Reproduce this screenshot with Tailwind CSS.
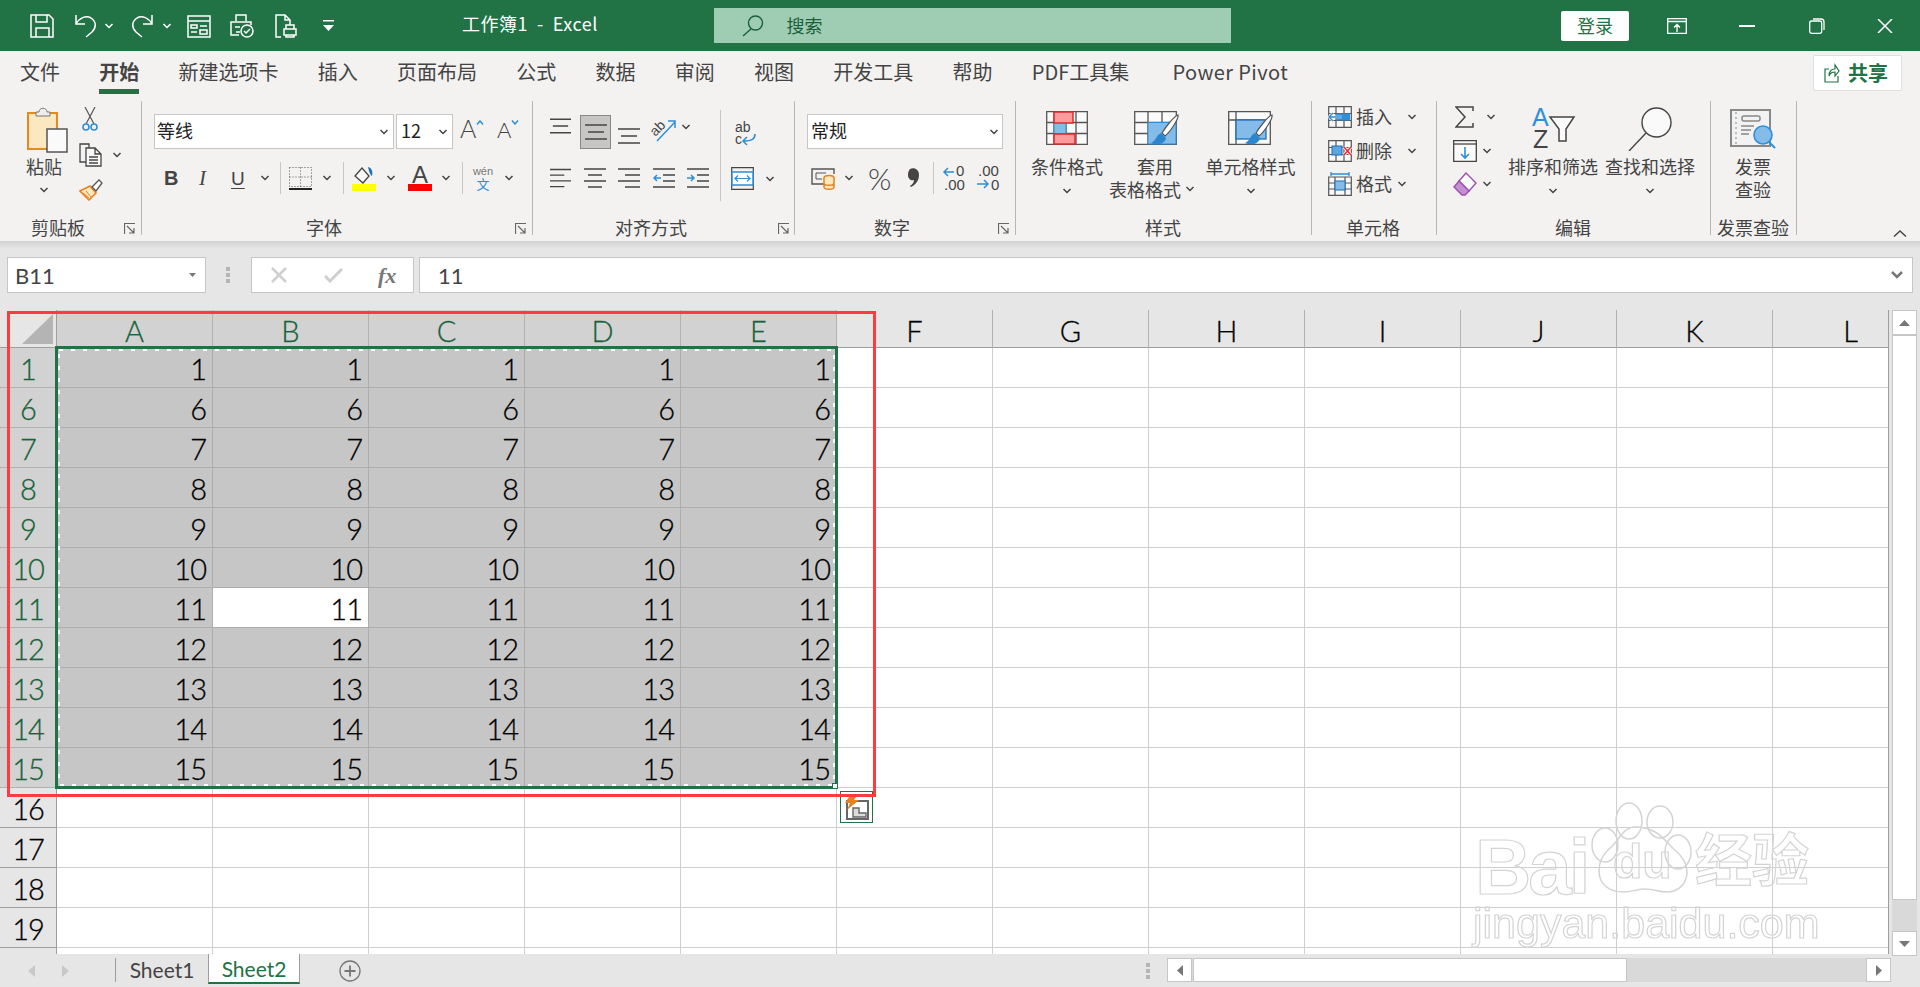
<!DOCTYPE html>
<html lang="zh-CN">
<head>
<meta charset="UTF-8">
<title>工作簿1 - Excel</title>
<script src="https://cdn.jsdelivr.net/npm/@tailwindcss/browser@4"></script>
</head>
<body class="h-[987px] w-[1920px] overflow-hidden bg-[#e6e6e6] font-['Noto_Sans_CJK_SC',sans-serif] text-[18px] leading-[19px] text-[#444]">

<!-- shared icons -->
<svg class="hidden">
  <symbol id="chev" viewBox="0 0 10 6"><path d="M1.5 1 5 4.500 8.500 1" fill="none" stroke="#444" stroke-width="1.500"/></symbol>
  <symbol id="launch" viewBox="0 0 12 12"><path d="M.5 11V.5H11M3 3l7 7M10 5v5H5" fill="none" stroke="#666" stroke-width="1.200"/></symbol>
  <symbol id="lines" viewBox="0 0 22 16"><path d="M0 1h22M3 8h16M0 15h22" stroke="#444" stroke-width="1.500"/></symbol>
  <symbol id="linesl" viewBox="0 0 22 20"><path d="M0 1h22M0 7h15M0 13h22M0 19h15" stroke="#444" stroke-width="1.500"/></symbol>
  <symbol id="linesc" viewBox="0 0 22 20"><path d="M0 1h22M4 7h14M0 13h22M4 19h14" stroke="#444" stroke-width="1.500"/></symbol>
  <symbol id="linesr" viewBox="0 0 22 20"><path d="M0 1h22M7 7h15M0 13h22M7 19h15" stroke="#444" stroke-width="1.500"/></symbol>
  <symbol id="grid" viewBox="0 0 24 22"><path d="M.7.7h22.600v20.600H.7zM.7 7.500h22.600M.7 14.500h22.600M8 .7v20.600M16 .7v20.600" fill="#f8f8f8" stroke="#555" stroke-width="1.200"/></symbol>
</svg>

<!-- title bar -->
<header class="flex h-[51px] items-center bg-[#217346] text-white">
  <svg class="ml-[30px] h-[24px] w-[24px] shrink-0" viewBox="0 0 24 24" fill="none" stroke="#fff" stroke-width="1.500"><path d="M1 1h18l4 4v18H1zM6 1v7h11V1M6 23v-9h13v9"/></svg>
  <svg class="ml-[19px] h-[24px] w-[24px] shrink-0" viewBox="0 0 24 24" fill="none" stroke="#fff" stroke-width="1.500"><path d="M3 1v9h9M3 10C6 4 13 1 18 4c6 4 5 10 1 14l-6 5"/></svg>
  <svg class="ml-[7px] h-[6px] w-[10px] shrink-0" viewBox="0 0 10 6"><path d="M1.500 1 5 4.500 8.500 1" fill="none" stroke="#fff" stroke-width="1.500"/></svg>
  <svg class="ml-[17px] h-[24px] w-[24px] shrink-0" viewBox="0 0 24 24" fill="none" stroke="#fff" stroke-width="1.500"><path d="M21 1v9h-9M21 10C18 4 11 1 6 4 0 8 1 14 5 18l6 5"/></svg>
  <svg class="ml-[7px] h-[6px] w-[10px] shrink-0" viewBox="0 0 10 6"><path d="M1.500 1 5 4.500 8.500 1" fill="none" stroke="#fff" stroke-width="1.500"/></svg>
  <svg class="ml-[15px] h-[24px] w-[24px] shrink-0" viewBox="0 0 24 24" fill="none" stroke="#fff" stroke-width="1.500"><path d="M1 2h22v21H1zM1 7h22M4 11h6v3H4zM13 12h7M4 18h6M13 16h7v4h-7z"/></svg>
  <svg class="ml-[19px] h-[24px] w-[24px] shrink-0" viewBox="0 0 24 24" fill="none" stroke="#fff" stroke-width="1.500"><path d="M6 7V1h10v6M9 21H1V8h20v3M5 13h5M6 18h4"/><circle cx="17" cy="17" r="6"/><path d="m14 17 2 2 4-4"/></svg>
  <svg class="ml-[21px] h-[24px] w-[22px] shrink-0" viewBox="0 0 22 24" fill="none" stroke="#fff" stroke-width="1.500"><path d="M6 23H1V1h9l5 5v5M10 1v5h5M9 15h12v6H9zM11 15v-4h8v4M11 21v2h8v-2"/></svg>
  <svg class="ml-[26px] h-[12px] w-[11px] shrink-0" viewBox="0 0 11 12" fill="#fff"><path d="M0 0h11v1.500H0zM0 5h11l-5.500 6z"/></svg>
  <div class="ml-[128px] mb-[4px] w-[136px] shrink-0 whitespace-pre text-[18px] tracking-[0.5px]">工作簿1  -  Excel</div>
  <div class="ml-[115.500px] flex h-[35px] w-[517.500px] shrink-0 items-center bg-[#9fcdb3] text-[#1b5e3a]">
    <svg class="ml-[28px] h-[22px] w-[22px] shrink-0" viewBox="0 0 22 22" fill="none" stroke="#1b5e3a" stroke-width="1.400"><circle cx="13.500" cy="8" r="7"/><path d="M9 14 1 21"/></svg>
    <span class="ml-[23px]">搜索</span>
  </div>
  <button class="ml-[330px] flex h-[30px] w-[68px] shrink-0 items-center justify-center rounded-[2px] bg-white text-[#217346]">登录</button>
  <svg class="ml-[38px] h-[16px] w-[20px] shrink-0" viewBox="0 0 20 16" fill="none" stroke="#fff" stroke-width="1.300"><path d="M.7.7h18.600v14.600H.7zM.7 3.500h18.600M10 14V7M7 9.500l3-3 3 3"/></svg>
  <div class="ml-[52px] h-[2px] w-[16px] shrink-0 bg-white"></div>
  <svg class="ml-[53.500px] h-[16px] w-[16px] shrink-0" viewBox="0 0 16 16" fill="none" stroke="#fff" stroke-width="1.300"><rect x=".7" y="3" width="12" height="12.300" rx="2"/><path d="M4 1h8a3 3 0 0 1 3 3v8"/></svg>
  <svg class="ml-[52.500px] h-[14px] w-[16px] shrink-0" viewBox="0 0 16 14" fill="none" stroke="#fff" stroke-width="1.500"><path d="m1 0 14 14M15 0 1 14"/></svg>
</header>

<!-- tabs -->
<nav class="flex h-[50px] items-start bg-[#f3f2f1] pl-[20px] text-[20px] leading-[28px]">
  <div class="flex gap-[39.250px] pt-[7px]">
    <span>文件</span>
    <span class="relative font-bold">开始<span class="absolute bottom-[-8px] left-0 h-[5px] w-full bg-[#217346]"></span></span>
    <span>新建选项卡</span>
    <span>插入</span>
    <span>页面布局</span>
    <span>公式</span>
    <span>数据</span>
    <span>审阅</span>
    <span>视图</span>
    <span>开发工具</span>
    <span>帮助</span>
    <span>PDF工具集</span>
    <span class="ml-[4px] tracking-[0.4px]">Power Pivot</span>
  </div>
  <button class="ml-auto mr-[18px] mt-[4px] flex h-[36px] w-[89px] items-center rounded-[2px] border border-[#e1dfdd] bg-white font-bold text-[#217346]">
    <svg class="ml-[10px] mr-[8px] h-[20px] w-[16px]" viewBox="0 0 16 20" fill="none" stroke="#217346" stroke-width="1.200"><path d="M5 6H1v13h13v-6M5 13c0-5 3-7 6-7V2l4 6-4 5V9c-3 0-5 1-6 4z"/></svg>共享
  </button>
</nav>

<!-- ribbon -->
<div class="flex h-[140px] items-start bg-[#f3f2f1]">

  <!-- clipboard -->
  <section class="flex h-[134px] w-[142px] shrink-0 flex-col border-r border-[#b8b6b4]">
    <div class="flex pt-[6px]">
      <div class="ml-[9px] flex w-[70px] flex-col items-center">
        <svg class="ml-[6px] h-[46px] w-[41px]" viewBox="0 0 41 46"><rect x="1" y="6" width="29" height="36" fill="#fbe7c0" stroke="#e38b1e" stroke-width="2"/><path d="M9 9V5h3c0-5 8-5 8 0h3v4z" fill="#eee" stroke="#777"/><rect x="20" y="22" width="20" height="23" fill="#fafafa" stroke="#555" stroke-width="1.500"/></svg>
        <span class="mt-[4px]">粘贴</span>
        <svg class="mt-[11px] h-[6px] w-[10px]"><use href="#chev"/></svg>
      </div>
      <div class="flex flex-col">
        <svg class="ml-[3px] h-[24px] w-[16px]" viewBox="0 0 16 24" fill="none"><path d="M3 0l9 17M13 0 4 17" stroke="#555" stroke-width="1.200"/><circle cx="4" cy="20" r="3" stroke="#2e8fd8" stroke-width="1.600"/><circle cx="12" cy="20" r="3" stroke="#2e8fd8" stroke-width="1.600"/></svg>
        <div class="mt-[12px] flex items-center">
          <svg class="h-[24px] w-[24px]" viewBox="0 0 24 24" fill="none" stroke="#444" stroke-width="1.300"><path d="M7 19H1V1h9v4"/><path d="M7 5h9l6 6v12H7zM16 5v6h6M10 14h9M10 17h9M10 20h9" fill="#f8f8f8"/></svg>
          <svg class="ml-[9px] h-[6px] w-[10px]"><use href="#chev"/></svg>
        </div>
        <svg class="mt-[12px] h-[22px] w-[24px]" viewBox="0 0 24 22" fill="none"><path d="M1 12 11 7l6 7-7 7z" fill="#fbe7c0" stroke="#e8821e" stroke-width="1.600"/><path d="M4 14l6 5M7 12l5 6" stroke="#e8821e"/><path d="M13 8l7-7 3 3-6 8z" fill="#fff" stroke="#555" stroke-width="1.300"/></svg>
      </div>
    </div>
    <div class="mt-auto flex h-[20px] items-end">
      <span class="mb-[-2px] w-[116px] text-center leading-[20px]">剪贴板</span>
      <svg class="ml-[8px] h-[12px] w-[12px]"><use href="#launch"/></svg>
    </div>
  </section>

  <!-- font -->
  <section class="flex h-[134px] w-[391px] shrink-0 flex-col border-r border-[#b8b6b4] pl-[12px] pt-[13px]">
    <div class="flex h-[35px] items-center">
      <div class="flex h-[35px] w-[240px] items-center border border-[#c8c6c4] bg-white pl-[2px] text-[#222]"><span class="mb-[2px]">等线</span><svg class="ml-auto mr-[4px] h-[6px] w-[10px]"><use href="#chev"/></svg></div>
      <div class="ml-[2px] flex h-[35px] w-[57px] items-center border border-[#c8c6c4] bg-white pl-[4px] text-[#222]"><span class="mb-[2px]">12</span><svg class="ml-auto mr-[4px] h-[6px] w-[10px]"><use href="#chev"/></svg></div>
      <div class="mb-[6px] ml-[7px] flex w-[25px] shrink-0 items-start font-['Lato',sans-serif] text-[25px] font-light">A<svg class="mt-[1px] h-[5px] w-[8px]" viewBox="0 0 8 5"><path d="M1 4.500 4 1l3 3.500" fill="none" stroke="#2e8fd8" stroke-width="1.500"/></svg></div>
      <div class="mb-[4px] ml-[12px] flex w-[23px] shrink-0 items-start font-['Lato',sans-serif] text-[22px] font-light">A<svg class="h-[5px] w-[8px]" viewBox="0 0 8 5"><path d="M1 .5 4 4l3-3.500" fill="none" stroke="#2e8fd8" stroke-width="1.500"/></svg></div>
    </div>
    <div class="mt-[16px] flex h-[26px] items-center">
      <span class="ml-[10px] w-[12px] font-['Liberation_Sans',sans-serif] text-[20px] font-bold">B</span>
      <span class="ml-[23px] w-[10px] font-['Liberation_Serif',serif] text-[21px] italic">I</span>
      <span class="ml-[22px] w-[13px] font-['Liberation_Sans',sans-serif] text-[19px] underline underline-offset-3">U</span>
      <svg class="ml-[15.500px] h-[6px] w-[10px]"><use href="#chev"/></svg>
      <div class="ml-[10.500px] h-[32px] w-px bg-[#c8c6c4]"></div>
      <svg class="ml-[8px] h-[23px] w-[23px]" viewBox="0 0 23 23" fill="none"><path d="M.5.500h22v19H.5zM11.500.500v19M.5 10h22" stroke="#555" stroke-dasharray="1 2"/><path d="M0 22h23" stroke="#222" stroke-width="2"/></svg>
      <svg class="ml-[10px] h-[6px] w-[10px]"><use href="#chev"/></svg>
      <div class="ml-[11px] h-[32px] w-px bg-[#c8c6c4]"></div>
      <svg class="ml-[8px] h-[25px] w-[24px]" viewBox="0 0 24 25"><path d="M3 10 10 2l7 8-6 7z" fill="#f8f8f8" stroke="#444" stroke-width="1.300"/><path d="M16 1c4 1 5 5 4 9-2-1-3-5-4-9z" fill="#1f6fb5"/><rect y="18" width="24" height="7" fill="#ffff00"/></svg>
      <svg class="ml-[10px] h-[6px] w-[10px]"><use href="#chev"/></svg>
      <svg class="ml-[12px] h-[25px] w-[24px]" viewBox="0 0 24 25"><text x="12" y="17" text-anchor="middle" font-family="Liberation Sans" font-size="24" fill="#444">A</text><rect y="18" width="24" height="7" fill="#ff0000"/></svg>
      <svg class="ml-[9px] h-[6px] w-[10px]"><use href="#chev"/></svg>
      <div class="ml-[11px] h-[32px] w-px bg-[#c8c6c4]"></div>
      <div class="ml-[9px] flex w-[22px] flex-col items-center text-[#2e8fd8]">
        <span class="font-['Liberation_Sans',sans-serif] text-[11px] leading-[11px] text-[#777]">wén</span>
        <span class="text-[13px] leading-[14px]">文</span>
      </div>
      <svg class="ml-[10px] h-[6px] w-[10px]"><use href="#chev"/></svg>
    </div>
    <div class="ml-[-12px] mt-auto flex h-[20px] items-end">
      <span class="mb-[-2px] w-[364px] text-center leading-[20px]">字体</span>
      <svg class="ml-[9px] h-[12px] w-[12px]"><use href="#launch"/></svg>
    </div>
  </section>

  <!-- alignment -->
  <section class="flex h-[134px] w-[262px] shrink-0 flex-col border-r border-[#b8b6b4] pl-[17px] pt-[9px]">
    <div class="flex">
      <div class="w-[159px] shrink-0 pt-[5px]">
        <div class="flex h-[34px] items-start">
          <svg class="mt-[3px] h-[16px] w-[21px]"><use href="#lines"/></svg>
          <div class="ml-[9px] flex h-[34px] w-[31px] items-center justify-center border border-[#8a8886] bg-[#c8c6c4]"><svg class="h-[16px] w-[22px]"><use href="#lines"/></svg></div>
          <svg class="ml-[7px] mt-[13px] h-[16px] w-[22px]"><use href="#lines"/></svg>
          <svg class="ml-[11px] mt-[3px] h-[24px] w-[26px] overflow-visible" viewBox="0 0 26 24"><text x="0" y="15" font-family="Liberation Sans" font-size="14" fill="#444" transform="rotate(-45 7 12)">ab</text><path d="M6 23 24 4M17 3h7v7" fill="none" stroke="#2e8fd8" stroke-width="1.500"/></svg>
          <svg class="ml-[4px] mt-[9px] h-[6px] w-[10px]"><use href="#chev"/></svg>
        </div>
        <div class="mt-[16px] flex h-[26px] items-center">
          <svg class="h-[20px] w-[21px]"><use href="#linesl"/></svg>
          <svg class="ml-[13px] h-[20px] w-[22px]"><use href="#linesc"/></svg>
          <svg class="ml-[12px] h-[20px] w-[22px]"><use href="#linesr"/></svg>
          <svg class="ml-[13px] h-[20px] w-[22px]" viewBox="0 0 22 20" fill="none"><path d="M0 1h22M10 7h12M10 13h12M0 19h22" stroke="#444" stroke-width="1.500"/><path d="M8 10H1M4 7l-3 3 3 3" stroke="#2e8fd8" stroke-width="1.500"/></svg>
          <svg class="ml-[12px] h-[20px] w-[22px]" viewBox="0 0 22 20" fill="none"><path d="M0 1h22M10 7h12M10 13h12M0 19h22" stroke="#444" stroke-width="1.500"/><path d="M0 10h7M4 7l3 3-3 3" stroke="#2e8fd8" stroke-width="1.500"/></svg>
        </div>
      </div>
      <div class="ml-[11px] h-[91px] w-px shrink-0 bg-[#c8c6c4]"></div>
      <div class="flex flex-col">
        <svg class="ml-[14px] mt-[11px] h-[24px] w-[21px] overflow-visible" viewBox="0 0 21 24"><text x="0" y="11" font-family="Liberation Sans" font-size="14" fill="#444">ab</text><text x="0" y="23" font-family="Liberation Sans" font-size="14" fill="#444">c</text><path d="M20 13c0 5-3 7-12 7M12 16l-4 4 4 4" fill="none" stroke="#2e8fd8" stroke-width="1.600"/></svg>
        <div class="ml-[10px] mt-[22px] flex items-center">
          <svg class="h-[23px] w-[23px]" viewBox="0 0 23 23" fill="none"><path d="M.7.7h21.600v21.600H.7z" stroke="#444" stroke-width="1.200"/><rect x="1" y="5" width="21" height="13" fill="#fff" stroke="#2e8fd8" stroke-width="1.500"/><path d="M4 11.500h15M7 8.500l-3 3 3 3M16 8.500l3 3-3 3" stroke="#2e8fd8" stroke-width="1.200"/></svg>
          <svg class="ml-[10.500px] h-[6px] w-[10px]"><use href="#chev"/></svg>
        </div>
      </div>
    </div>
    <div class="ml-[-17px] mt-auto flex h-[20px] items-end">
      <span class="mb-[-2px] w-[236px] text-center leading-[20px]">对齐方式</span>
      <svg class="ml-[8.500px] h-[12px] w-[12px]"><use href="#launch"/></svg>
    </div>
  </section>

  <!-- number -->
  <section class="flex h-[134px] w-[221px] shrink-0 flex-col border-r border-[#b8b6b4] pl-[12px] pt-[13px]">
    <div class="flex h-[35px] w-[196px] items-center border border-[#c8c6c4] bg-white pl-[3px] text-[#222]"><span class="mb-[2px]">常规</span><svg class="ml-auto mr-[3px] h-[6px] w-[10px]"><use href="#chev"/></svg></div>
    <div class="mt-[16px] flex h-[26px] items-center">
      <svg class="ml-[4px] h-[24px] w-[24px]" viewBox="0 0 24 24" fill="none"><path d="M15 18H1V3h22v5" stroke="#555" stroke-width="1.400"/><path d="M5 7h10M5 13h6M5 7v6" stroke="#555"/><ellipse cx="18" cy="12" rx="5" ry="2.500" fill="#fbe7c0" stroke="#e8821e" stroke-width="1.500"/><path d="M13 12v9c0 3 10 3 10 0v-9M13 17c0 3 10 3 10 0" fill="#fbe7c0" stroke="#e8821e" stroke-width="1.500"/></svg>
      <svg class="ml-[9px] h-[6px] w-[10px]"><use href="#chev"/></svg>
      <span class="ml-[14px] w-[24px] font-['Lato',sans-serif] text-[30px] font-light leading-[26px] tracking-[-2px]">%</span>
      <svg class="ml-[15px] h-[22px] w-[15px]" viewBox="0 0 15 22"><path d="M3 2c4-2 9 0 9 6 0 6-4 10-8 12l-1-1c3-2 4-4 4-6-3 1-6-1-6-5 0-3 1-5 2-6z" fill="#444"/></svg>
      <div class="ml-[11px] h-[32px] w-px bg-[#c8c6c4]"></div>
      <svg class="ml-[8px] h-[26px] w-[23px] overflow-visible" viewBox="0 0 23 26" font-family="Liberation Sans" font-size="15" fill="#444"><text x="14" y="11">0</text><text x="2" y="25">.00</text><path d="M12 7H2M6 3 2 7l4 4" fill="none" stroke="#2e8fd8" stroke-width="1.500"/></svg>
      <svg class="ml-[11px] h-[26px] w-[23px] overflow-visible" viewBox="0 0 23 26" font-family="Liberation Sans" font-size="15" fill="#444"><text x="2" y="11">.00</text><text x="15" y="25">0</text><path d="M1 19h11M8 15l4 4-4 4" fill="none" stroke="#2e8fd8" stroke-width="1.500"/></svg>
    </div>
    <div class="ml-[-12px] mt-auto flex h-[20px] items-end">
      <span class="mb-[-2px] w-[194px] text-center leading-[20px]">数字</span>
      <svg class="ml-[9px] h-[12px] w-[12px]"><use href="#launch"/></svg>
    </div>
  </section>

  <!-- styles -->
  <section class="flex h-[134px] w-[296px] shrink-0 flex-col border-r border-[#b8b6b4] pt-[10px]">
    <div class="flex">
      <div class="ml-[15px] flex w-[72px] flex-col items-center">
        <svg class="h-[34px] w-[42px]" viewBox="0 0 42 34"><path d="M.7.7h40.600v32.600H.7zM.7 11.500h40.600M.7 22.500h40.600M8 .7v32.600M20 .7v32.600M30 .7v32.600" fill="#fafafa" stroke="#555" stroke-width="1.300"/><rect x="8" y="11.500" width="12" height="11" fill="#85bbe8" stroke="#2e8fd8"/><rect x="8" y="1" width="19" height="11" fill="#ff9a9f" stroke="#dc2c2c" stroke-width="1.500"/><rect x="8" y="23" width="21" height="10" fill="#ff9a9f" stroke="#dc2c2c" stroke-width="1.500"/></svg>
        <span class="mt-[12px]">条件格式</span>
        <svg class="mt-[12px] h-[6px] w-[10px]"><use href="#chev"/></svg>
      </div>
      <div class="ml-[6px] flex w-[88px] flex-col">
        <svg class="ml-[25px] h-[34px] w-[45px]" viewBox="0 0 45 34"><path d="M.7.7h41.600v32.600H.7zM.7 11.500h41.600M.7 22.500h41.600M14 .7v32.600M28 .7v32.600" fill="#fafafa" stroke="#555" stroke-width="1.300"/><rect x="14" y="11.500" width="28" height="21.500" fill="#85bbe8" stroke="#2e8fd8"/><path d="M44 4c1 4-8 17-13 21l-3-3C31 17 40 5 44 4z" fill="#fff" stroke="#555" stroke-width="1.200"/><path d="M27 22c-4 1-5 8-10 10 6 3 14 1 15-5z" fill="#2b86cd"/></svg>
        <span class="ml-[28px] mt-[12px]">套用</span>
        <div class="mt-[3.500px] flex items-center">表格格式<svg class="ml-[4px] h-[6px] w-[10px]"><use href="#chev"/></svg></div>
      </div>
      <div class="ml-[8px] flex w-[91px] flex-col items-center">
        <svg class="h-[34px] w-[45px]" viewBox="0 0 45 34"><path d="M.7.7h41.600v32.600H.7zM.7 9h41.600M8 .7v32.600" fill="#fafafa" stroke="#555" stroke-width="1.300"/><rect x="8" y="9" width="30" height="19" fill="#85bbe8" stroke="#1f6fb5" stroke-width="1.300"/><path d="M44 4c1 4-8 17-13 21l-3-3C31 17 40 5 44 4z" fill="#fff" stroke="#555" stroke-width="1.200"/><path d="M27 22c-4 1-5 8-10 10 6 3 14 1 15-5z" fill="#2b86cd"/></svg>
        <span class="mt-[12px]">单元格样式</span>
        <svg class="mt-[12px] h-[6px] w-[10px]"><use href="#chev"/></svg>
      </div>
    </div>
    <div class="mt-auto flex h-[20px] items-end">
      <span class="mb-[-2px] w-[294px] text-center leading-[20px]">样式</span>
    </div>
  </section>

  <!-- cells -->
  <section class="flex h-[134px] w-[125px] shrink-0 flex-col border-r border-[#b8b6b4] pl-[16px] pt-[4px]">
    <div class="flex h-[24px] items-center">
      <svg class="h-[22px] w-[24px]" viewBox="0 0 24 22"><use href="#grid"/><rect x="8" y="7.500" width="14" height="7" fill="#2e8fd8"/><path d="M14 11H1M5 7l-4 4 4 4" fill="none" stroke="#fff" stroke-width="2.500"/><path d="M14 11H1M5 7l-4 4 4 4" fill="none" stroke="#2e8fd8" stroke-width="1.400"/></svg>
      <span class="mb-[2px] ml-[4px]">插入</span>
      <svg class="ml-[14.500px] h-[6px] w-[10px]"><use href="#chev"/></svg>
    </div>
    <div class="mt-[10px] flex h-[24px] items-center">
      <svg class="h-[22px] w-[24px]" viewBox="0 0 24 22"><use href="#grid"/><rect x="4" y="6" width="10" height="9" fill="#5ba6e3" stroke="#1f6fb5"/><path d="m16 7 7 8M23 7l-7 8" stroke="#fff" stroke-width="3"/><path d="m16 7 7 8M23 7l-7 8" stroke="#e8262c" stroke-width="1.500"/></svg>
      <span class="mb-[2px] ml-[4px]">删除</span>
      <svg class="ml-[14.500px] h-[6px] w-[10px]"><use href="#chev"/></svg>
    </div>
    <div class="mt-[9px] flex h-[24px] items-center">
      <svg class="h-[24px] w-[24px]" viewBox="0 0 24 24"><path d="M.7 5h22.600v18.300H.7zM.7 11h22.600M.7 17h22.600M7 5v18M17 5v18" fill="#f8f8f8" stroke="#555" stroke-width="1.200"/><rect x="7" y="9" width="10" height="9" fill="#85bbe8" stroke="#1f6fb5"/><path d="M3 2h18M3 0v4M21 0v4" stroke="#2e8fd8" stroke-width="1.300"/></svg>
      <span class="mb-[2px] ml-[4px]">格式</span>
      <svg class="ml-[5px] h-[6px] w-[10px]"><use href="#chev"/></svg>
    </div>
    <div class="ml-[-16px] mt-auto flex h-[20px] items-end">
      <span class="mb-[-2px] w-[122px] text-center leading-[20px]">单元格</span>
    </div>
  </section>

  <!-- editing -->
  <section class="flex h-[134px] w-[274px] shrink-0 flex-col border-r border-[#b8b6b4]">
    <div class="flex">
      <div class="ml-[16px] w-[43px] shrink-0 pt-[4px]">
        <div class="flex h-[24px] items-center">
          <svg class="ml-[2px] h-[22px] w-[19px]" viewBox="0 0 19 22"><path d="M18 5V1H1l9 10-9 10h17v-4" fill="none" stroke="#444" stroke-width="1.500"/></svg>
          <svg class="ml-[12px] h-[6px] w-[10px]"><use href="#chev"/></svg>
        </div>
        <div class="mt-[10px] flex h-[24px] items-center">
          <svg class="h-[22px] w-[24px]" viewBox="0 0 24 22" fill="none"><path d="M.7.7h22.600v20.600H.7z" fill="#fafafa" stroke="#444" stroke-width="1.300"/><path d="M.7 4h22.600" stroke="#444" stroke-width="1.300"/><path d="M12 7v11M8 14l4 4 4-4" stroke="#2e8fd8" stroke-width="1.600"/></svg>
          <svg class="ml-[5px] h-[6px] w-[10px]"><use href="#chev"/></svg>
        </div>
        <div class="mt-[9px] flex h-[24px] items-center">
          <svg class="h-[24px] w-[24px]" viewBox="0 0 24 24"><path d="M13 1l10 10-7 8L6 9z" fill="#fff" stroke="#9c4fb0" stroke-width="1.400"/><path d="M6 9l10 10-4 4H9L1 15z" fill="#c58fd2" stroke="#9c4fb0" stroke-width="1.400"/></svg>
          <svg class="ml-[5px] h-[6px] w-[10px]"><use href="#chev"/></svg>
        </div>
      </div>
      <div class="ml-[12px] flex w-[90px] shrink-0 flex-col items-center pt-[7px]">
        <svg class="h-[40px] w-[43px] overflow-visible" viewBox="0 0 43 40" font-family="Liberation Sans" font-size="25"><text x="0" y="18" fill="#2e8fd8">A</text><text x="1" y="40" fill="#444">Z</text><path d="M18 9h24l-8 12v12h-7V21z" fill="#fafafa" stroke="#444" stroke-width="1.500"/></svg>
        <span class="mt-[9px]">排序和筛选</span>
        <svg class="mt-[12px] h-[6px] w-[10px]"><use href="#chev"/></svg>
      </div>
      <div class="ml-[7px] flex w-[90px] shrink-0 flex-col items-center pt-[6px]">
        <svg class="h-[44px] w-[44px]" viewBox="0 0 44 44" fill="none" stroke="#444" stroke-width="1.400"><circle cx="28.500" cy="15.500" r="14.500" fill="#fafafa"/><path d="M18 26 1 44"/></svg>
        <span class="mt-[6px]">查找和选择</span>
        <svg class="mt-[12px] h-[6px] w-[10px]"><use href="#chev"/></svg>
      </div>
    </div>
    <div class="mt-auto flex h-[20px] items-end">
      <span class="mb-[-2px] w-[272px] text-center leading-[20px]">编辑</span>
    </div>
  </section>

  <!-- invoice check -->
  <section class="flex h-[134px] w-[86px] shrink-0 flex-col border-r border-[#b8b6b4] pt-[8px]">
    <div class="flex w-[84px] flex-col items-center">
      <svg class="h-[40px] w-[47px]" viewBox="0 0 47 40"><rect x="1" y="1" width="39" height="36" fill="#f2f2f2" stroke="#888" stroke-width="2"/><path d="M6 3v32" stroke="#888" stroke-dasharray="2 3"/><rect x="12" y="7" width="18" height="5" rx="2" fill="none" stroke="#888" stroke-width="1.500"/><path d="M11 17h13M11 21h10M11 25h8" stroke="#888" stroke-width="1.500"/><circle cx="33" cy="26" r="9" fill="#85bbe8" stroke="#2e8fd8" stroke-width="1.600"/><path d="m39 33 6 6" stroke="#2e8fd8" stroke-width="2"/></svg>
      <span class="mt-[8px]">发票</span>
      <span class="mt-[3.500px]">查验</span>
    </div>
    <div class="mt-auto flex h-[20px] items-end">
      <span class="mb-[-2px] w-[84px] text-center leading-[20px]">发票查验</span>
    </div>
  </section>

  <svg class="ml-auto mr-[13px] mt-[129px] h-[7px] w-[14px]" viewBox="0 0 14 7"><path d="M1 6.500 7 1l6 5.500" fill="none" stroke="#444" stroke-width="1.400"/></svg>
</div>

<!-- formula bar -->
<div class="h-[69px]">
  <div class="h-[8px] bg-linear-to-b from-[#d2d2d2] to-[#e6e6e6]"></div>
  <div class="mt-[8px] flex h-[36px] items-stretch font-['Lato',sans-serif] text-[22px]">
    <div class="ml-[7px] flex w-[199px] items-center border border-[#c8c6c4] bg-white pl-[7px] text-[#444]">B11<svg class="ml-auto mr-[9px] h-[4px] w-[7px]" viewBox="0 0 7 4"><path d="M0 0h7L3.500 4z" fill="#777"/></svg></div>
    <div class="ml-[20px] flex w-[4px] flex-col justify-center gap-[2px]"><i class="h-[4px] bg-[#b5b5b5]"></i><i class="h-[4px] bg-[#b5b5b5]"></i><i class="h-[4px] bg-[#b5b5b5]"></i></div>
    <div class="ml-[21px] flex w-[163px] items-center border border-[#c8c6c4] bg-white">
      <svg class="ml-[19px] h-[16px] w-[16px]" viewBox="0 0 16 16"><path d="m1 1 14 14M15 1 1 15" stroke="#cfcfcf" stroke-width="2.500"/></svg>
      <svg class="ml-[37px] h-[15px] w-[19px]" viewBox="0 0 19 15"><path d="m1 8 5 5L18 1" fill="none" stroke="#cfcfcf" stroke-width="3"/></svg>
      <span class="ml-[35px] font-['Liberation_Serif',serif] text-[22px] font-bold italic text-[#777]">fx</span>
    </div>
    <div class="ml-[5px] flex w-[1494px] items-center border border-[#c8c6c4] bg-white pl-[18px] text-[#444]">11<svg class="ml-auto mr-[9px] h-[8px] w-[12px]" viewBox="0 0 12 8"><path d="m1 1 5 5 5-5" fill="none" stroke="#777" stroke-width="2.500"/></svg></div>
  </div>
</div>

<!-- sheet -->
<main class="flex h-[644px] items-start">
  <div class="relative h-[644px] w-[1889px] shrink-0 border-r border-[#9e9e9e]">
    <div id="sheet" class="h-[644px] overflow-hidden bg-white font-['Lato',sans-serif] text-[29px] font-light leading-none text-black [-webkit-text-stroke:0.3px]"></div>

    <!-- copy selection -->
    <div class="absolute left-[55px] top-[36px] h-[443px] w-[783px] border-[3px] border-[#217346]">
      <svg class="h-full w-full" fill="none"><rect x="1" y="1" width="775" height="435" stroke="#fff" stroke-width="2" stroke-dasharray="4 8"/></svg>
      <div class="absolute bottom-[-3px] right-[-3px] h-[6px] w-[6px] border border-[#217346] bg-white"></div>
    </div>

    <!-- paste options -->
    <div class="absolute left-[840px] top-[481px] flex h-[32px] w-[33px] items-center justify-center border border-[#217346] bg-white">
      <svg class="h-[26px] w-[26px]" viewBox="0 0 26 26"><path d="M3 7h21v18H3z" fill="#fff" stroke="#666" stroke-width="2"/><path d="M9 14h6v5h7v4H9z" fill="#ddd" stroke="#666" stroke-width="1.400"/><path d="M7 0h7L10 6h5L3 16l3-7H1z" fill="#e8821e"/></svg>
    </div>

    <!-- red annotation -->
    <div class="absolute left-[7px] top-px h-[486px] w-[869px] border-[3px] border-[#ff3b3f]"></div>

    <!-- watermark -->
    <div class="absolute left-[1473px] top-[480px] h-[160px] w-[346px] font-['Liberation_Sans',sans-serif] leading-none text-transparent blur-[0.6px] [-webkit-text-stroke:1.200px_#d4d4d4]">
      <svg class="absolute inset-0 h-full w-full" viewBox="0 0 346 160" fill="none" stroke="#d4d4d4" stroke-width="1.500"><ellipse cx="156" cy="31" rx="13" ry="18"/><ellipse cx="187" cy="32" rx="13" ry="16"/><ellipse cx="132" cy="55" rx="13" ry="17"/><ellipse cx="205" cy="62" rx="13" ry="17"/><path d="M162 37c-12 0-16 14-26 22-8 7-10 14-10 22 0 12 9 21 24 21 10 0 14-3 22-3 8 0 14 3 22 3 12 0 20-9 20-20 0-9-4-15-11-21-11-9-17-24-41-24z"/></svg>
      <span class="absolute left-[2px] top-[38px] text-[78px] font-bold tracking-[-3px]">Bai</span>
      <span class="absolute left-[140px] top-[48px] text-[48px] font-bold">du</span>
      <span class="absolute left-[222px] top-[38px] font-['Noto_Sans_CJK_SC',sans-serif] text-[57px] font-bold">经验</span>
      <span class="absolute left-0 top-[112px] whitespace-nowrap text-[43px]">jingyan.baidu.com</span>
    </div>
  </div>

  <!-- vertical scrollbar -->
  <div class="relative z-10 ml-[3px] flex h-[646px] w-[25px] shrink-0 flex-col bg-[#d9d9d9]">
    <div class="flex h-[25px] items-center justify-center border border-[#c8c6c4] bg-white"><svg class="h-[6px] w-[11px]" viewBox="0 0 11 6"><path d="M0 6h11L5.500 0z" fill="#777"/></svg></div>
    <div class="h-[565px] border border-[#c8c6c4] bg-white"></div>
    <div class="mt-auto flex h-[25px] items-center justify-center border border-[#c8c6c4] bg-white"><svg class="h-[6px] w-[11px]" viewBox="0 0 11 6"><path d="M0 0h11L5.500 6z" fill="#777"/></svg></div>
  </div>
</main>

<!-- sheet tabs -->
<footer class="flex h-[33px] items-start bg-[#e6e6e6] font-['Lato',sans-serif] text-[21px]">
  <svg class="ml-[28px] mt-[11px] h-[12px] w-[7px]" viewBox="0 0 7 12"><path d="M7 0v12L0 6z" fill="#c8c8c8"/></svg>
  <svg class="ml-[27px] mt-[11px] h-[12px] w-[7px]" viewBox="0 0 7 12"><path d="M0 0v12l7-6z" fill="#c8c8c8"/></svg>
  <div class="ml-[46px] mt-[4px] h-[24px] w-px bg-[#9e9e9e]"></div>
  <div class="flex h-[30px] w-[92px] items-center justify-center text-[#444]">Sheet1</div>
  <div class="flex h-[30px] w-[92px] items-center justify-center border-x border-b-2 border-x-[#9e9e9e] border-b-[#217346] bg-white text-[#217346]">Sheet2</div>
  <svg class="ml-[39px] mt-[6px] h-[22px] w-[22px]" viewBox="0 0 22 22" fill="none" stroke="#777" stroke-width="1.300"><circle cx="11" cy="11" r="10"/><path d="M11 5.500v11M5.500 11h11" stroke-width="1.800"/></svg>
  <div class="ml-[785px] mt-[9px] flex w-[4px] flex-col gap-[2px]"><i class="h-[4px] bg-[#b5b5b5]"></i><i class="h-[4px] bg-[#b5b5b5]"></i><i class="h-[4px] bg-[#b5b5b5]"></i></div>
  <div class="ml-[17px] mt-[4px] flex h-[24px] w-[724px] bg-[#d9d9d9]">
    <div class="flex w-[25px] items-center justify-center border border-[#c8c6c4] bg-white"><svg class="h-[11px] w-[6px]" viewBox="0 0 6 11"><path d="M6 0v11L0 5.500z" fill="#777"/></svg></div>
    <div class="ml-px w-[434px] border border-[#c8c6c4] bg-white"></div>
    <div class="ml-auto flex w-[25px] items-center justify-center border border-[#c8c6c4] bg-white"><svg class="h-[11px] w-[6px]" viewBox="0 0 6 11"><path d="M0 0v11l6-5.500z" fill="#777"/></svg></div>
  </div>
</footer>

<script>
  // 12 columns: the block A:E of the filtered rows is greyed out, B11 stays active.
  // The last row only peeks out above the tab bar, so it carries no number.
  var cols = 'ABCDEFGHIJKL'.split('');
  var rowNums = [1, 6, 7, 8, 9, 10, 11, 12, 13, 14, 15, 16, 17, 18, 19, ''];
  var sheet = document.getElementById('sheet');

  function el(cls, text) {
    var d = document.createElement('div');
    d.className = cls;
    if (text !== undefined) d.textContent = text;
    return d;
  }

  var head = el('flex h-[38px] w-[1929px]');
  var corner = el('relative h-[38px] w-[57px] shrink-0 border-r border-b border-[#9e9e9e] bg-[#e6e6e6]');
  corner.appendChild(el('absolute bottom-[3px] right-[3px] h-[30px] w-[31px] bg-[#b4b4b4] [clip-path:polygon(100%_0,100%_100%,0_100%)]'));
  head.appendChild(corner);
  cols.forEach(function (c, i) {
    head.appendChild(el(i < 5
      ? 'flex h-[38px] w-[156px] shrink-0 items-center justify-center border-r border-b border-r-[#b1b1b1] border-b-[#9e9e9e] bg-[#d2d2d2] pt-[3px] text-[#17633a]'
      : 'flex h-[38px] w-[156px] shrink-0 items-center justify-center border-r border-b border-r-[#b1b1b1] border-b-[#9e9e9e] bg-[#e6e6e6] pt-[3px]', c));
  });
  sheet.appendChild(head);

  rowNums.forEach(function (n) {
    var selected = n !== '' && n <= 15;
    var row = el('flex h-[40px] w-[1929px]');
    row.appendChild(el(selected
      ? 'flex h-[40px] w-[57px] shrink-0 items-center justify-center border-r border-b border-r-[#9e9e9e] border-b-[#b1b1b1] bg-[#d2d2d2] pt-[2px] tracking-[-1px] text-[#17633a]'
      : 'flex h-[40px] w-[57px] shrink-0 items-center justify-center border-r border-b border-[#9e9e9e] bg-[#e6e6e6] pt-[2px] tracking-[-1px]', n));
    cols.forEach(function (c, i) {
      if (selected && i < 5) {
        var active = n === 11 && c === 'B';
        row.appendChild(el(active
          ? 'flex h-[40px] w-[156px] shrink-0 items-center justify-end border-r border-b border-[#adadad] bg-white pr-[6px] pt-[2px] tracking-[-1px]'
          : 'flex h-[40px] w-[156px] shrink-0 items-center justify-end border-r border-b border-[#adadad] bg-[#c6c6c6] pr-[6px] pt-[2px] tracking-[-1px]', n));
      } else {
        row.appendChild(el('h-[40px] w-[156px] shrink-0 border-r border-b border-[#cfcfcf]'));
      }
    });
    sheet.appendChild(row);
  });
</script>
</body>
</html>
